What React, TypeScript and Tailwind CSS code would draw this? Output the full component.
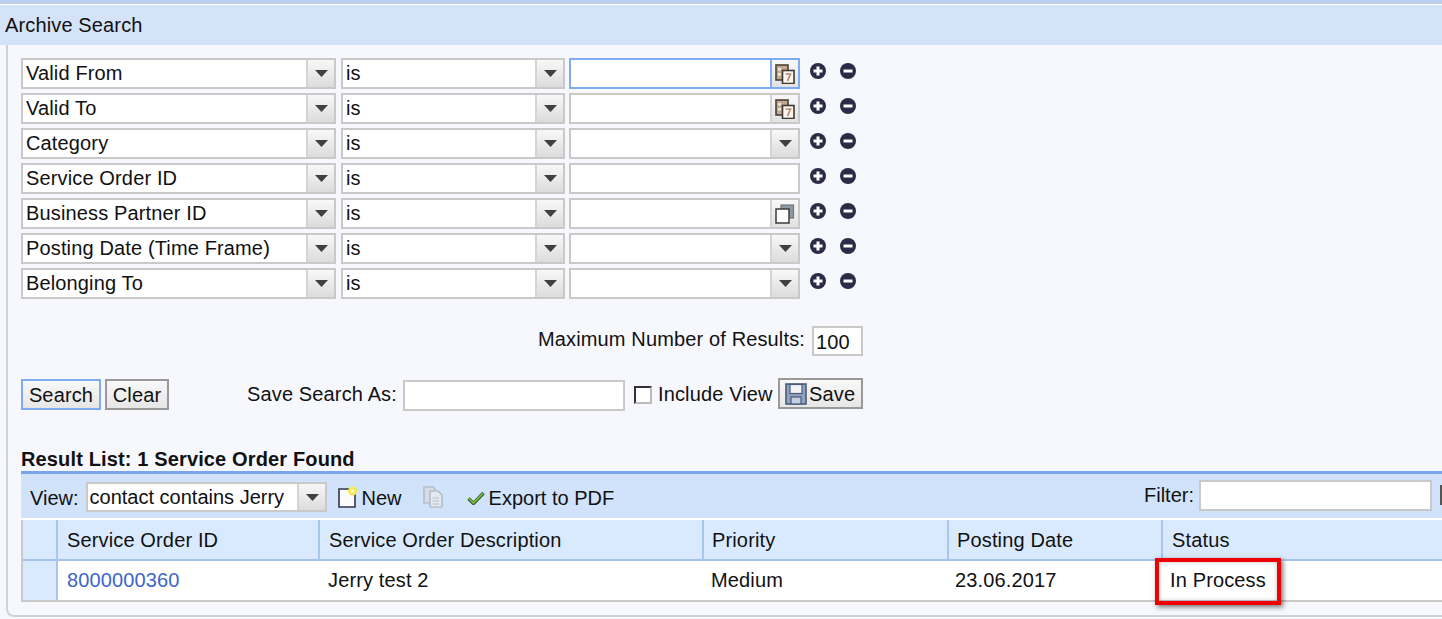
import React from "react";

function Arrow() {
  return (
    <svg width="13" height="7" viewBox="0 0 13 7">
      <path d="M0 0H13L6.5 7Z" fill="#404040" />
    </svg>
  );
}

function DropBox({ w, text }: { w: string; text?: string }) {
  return (
    <div className={`${w} h-[31px] flex border-2 border-[#c9c9c9] bg-white`}>
      <div className="flex-1 min-w-0 pl-[3px] leading-[27px] whitespace-nowrap overflow-hidden">{text}</div>
      <ArrowCell />
    </div>
  );
}

function ArrowCell() {
  return (
    <div className="w-[28px] shrink-0 border-l-2 border-[#d4d4d4] bg-gradient-to-b from-[#f8f8f8] to-[#dcdcdc] flex items-center justify-center pl-px">
      <Arrow />
    </div>
  );
}

function Calendar() {
  return (
    <svg width="20" height="20" viewBox="0 0 20 20">
      <rect x="1" y="1" width="12" height="15" fill="#c2a88f" stroke="#4a4238" strokeWidth="1.6" />
      <rect x="3" y="4" width="3" height="2.5" fill="#f1e8dc" />
      <rect x="3" y="9" width="3" height="2.5" fill="#f1e8dc" />
      <rect x="7.5" y="6.5" width="11.5" height="13" fill="#fbf7f1" stroke="#3f3a33" strokeWidth="1.6" />
      <path d="M10.5 10H15.5L12.5 17" fill="none" stroke="#b98a70" strokeWidth="1.7" />
    </svg>
  );
}

function Pages() {
  return (
    <svg width="20" height="20" viewBox="0 0 20 20">
      <rect x="6" y="1" width="12.5" height="13" fill="#8d9aa3" stroke="#6d777d" strokeWidth="1.2" />
      <rect x="1" y="5" width="13" height="14" fill="#fdfdfd" stroke="#3c3c3c" strokeWidth="1.5" />
    </svg>
  );
}

function CalendarCell({ active }: { active?: boolean }) {
  return (
    <div
      className={`w-[28px] shrink-0 border-l-2 ${active ? "border-[#7fabf2]" : "border-[#d4d4d4]"} bg-gradient-to-b from-[#f8f8f8] to-[#e2e2e2] flex items-center justify-center`}
    >
      <Calendar />
    </div>
  );
}

function PlusMinus() {
  return (
    <div className="flex gap-[14px] ml-[10px] -mt-[3px] h-[31px] items-center">
      <svg width="16" height="16" viewBox="0 0 16 16">
        <circle cx="8" cy="8" r="8" fill="#2b2b45" />
        <path d="M8 3.5V12.5M3.5 8H12.5" stroke="#fff" strokeWidth="3" />
      </svg>
      <svg width="16" height="16" viewBox="0 0 16 16">
        <circle cx="8" cy="8" r="8" fill="#2b2b45" />
        <path d="M3.5 8H12.5" stroke="#fff" strokeWidth="3" />
      </svg>
    </div>
  );
}

function FilterRow({ label, children }: { label: string; children: React.ReactNode }) {
  return (
    <div className="flex h-[31px] mb-[4px]">
      <DropBox w="w-[315px]" text={label} />
      <div className="ml-[5px]">
        <DropBox w="w-[224px]" text="is" />
      </div>
      <div className="ml-[4px]">{children}</div>
      <PlusMinus />
    </div>
  );
}

function ValueBox({ children, active }: { children?: React.ReactNode; active?: boolean }) {
  return (
    <div className={`w-[231px] h-[31px] flex border-2 bg-white ${active ? "border-[#7fabf2]" : "border-[#c9c9c9]"}`}>
      <div className="flex-1" />
      {children}
    </div>
  );
}

function PlainInput({ w }: { w: string }) {
  return <div className={`${w} h-[31px] border-2 border-[#c9c9c9] bg-white`} />;
}

function Btn({ children, w, active }: { children: React.ReactNode; w: string; active?: boolean }) {
  return (
    <div
      className={`${w} h-[31px] border-2 ${active ? "border-[#7fabf2]" : "border-[#999999]"} bg-gradient-to-b from-[#f8f8f8] to-[#e6e6e6] flex items-center justify-center`}
    >
      {children}
    </div>
  );
}

function Cell({ w, pl, border, children, link }: { w: string; pl: string; border?: boolean; children?: React.ReactNode; link?: boolean }) {
  return (
    <div
      className={`${w} ${pl} shrink-0 h-full flex items-center whitespace-nowrap ${border ? "border-l-2 border-[#a9c6ee]" : ""} ${link ? "text-[#3d66c9]" : ""}`}
    >
      {children}
    </div>
  );
}

export default function App() {
  return (
    <div className="w-[1442px] h-[619px] overflow-hidden relative bg-[#f7f8fe] text-[20px] tracking-[0.14px] text-[#111] font-['Liberation_Sans',Arial,sans-serif]">
      <div className="h-[4px] bg-[#b9cfee]" />
      <div className="h-px bg-white" />
      <div className="h-[40px] bg-[#d4e3f8] pl-[5px] leading-[40px]">Archive Search</div>

      <div className="ml-[6px] h-[572px] border-l-2 border-b-2 border-[#d2d2d2] rounded-bl-lg pl-[13px] pt-[13px]">
        <FilterRow label="Valid From">
          <ValueBox active>
            <CalendarCell active />
          </ValueBox>
        </FilterRow>
        <FilterRow label="Valid To">
          <ValueBox>
            <CalendarCell />
          </ValueBox>
        </FilterRow>
        <FilterRow label="Category">
          <ValueBox>
            <ArrowCell />
          </ValueBox>
        </FilterRow>
        <FilterRow label="Service Order ID">
          <ValueBox />
        </FilterRow>
        <FilterRow label="Business Partner ID">
          <ValueBox>
            <div className="w-[28px] shrink-0 border-l-2 border-[#d4d4d4] bg-gradient-to-b from-[#f8f8f8] to-[#e2e2e2] flex items-center justify-center">
              <Pages />
            </div>
          </ValueBox>
        </FilterRow>
        <FilterRow label="Posting Date (Time Frame)">
          <ValueBox>
            <ArrowCell />
          </ValueBox>
        </FilterRow>
        <FilterRow label="Belonging To">
          <ValueBox>
            <ArrowCell />
          </ValueBox>
        </FilterRow>

        <div className="w-[842px] mt-[26px] h-[31px] flex justify-end items-center">
          <span className="mr-[7px] -mt-[3px]">Maximum Number of Results:</span>
          <div className="w-[51px] h-[30px] border-2 border-[#c9c9c9] bg-white pl-[2px] leading-[28px]">100</div>
        </div>

        <div className="w-[842px] mt-[23px] h-[31px] flex items-center">
          <Btn w="w-[80px]" active>Search</Btn>
          <div className="ml-[4px]">
            <Btn w="w-[64px]">Clear</Btn>
          </div>
          <span className="ml-[78px] -mt-[2px]">Save Search As:</span>
          <div className="ml-[6px] mt-[1px]">
            <PlainInput w="w-[222px]" />
          </div>
          <div className="ml-[9px] w-[18px] h-[18px] border-2 border-l-[#333] border-t-[#333] border-r-[#bbb] border-b-[#bbb] bg-white" />
          <span className="ml-[6px] -mt-[2px]">Include View</span>
          <div className="ml-[5px] -mt-[2px]">
            <Btn w="w-[85px]">
              <svg width="22" height="22" viewBox="0 0 22 22" className="mr-[2px]">
                <rect x="1" y="1" width="20" height="20" fill="#8fa3c0" stroke="#4a5a78" strokeWidth="1.6" />
                <rect x="5" y="1.5" width="12" height="9" fill="#f2f4f8" stroke="#4a5a78" strokeWidth="1.2" />
                <rect x="6" y="14" width="10" height="7" fill="#c4d0e0" stroke="#4a5a78" strokeWidth="1.2" />
              </svg>
              Save
            </Btn>
          </div>
        </div>

        <div className="mt-[37px] h-[24px] font-bold leading-[24px] whitespace-nowrap">Result List: 1 Service Order Found</div>

        <div className="border-t-[3px] border-[#7ba5ea]">
          <div className="h-[44px] bg-[#d1e3fa] flex items-center pl-[9px] pt-[4px] tracking-normal">
            <span>View:</span>
            <div className="ml-[7px] -mt-[2px]">
              <div className="w-[241px] h-[30px] flex border-2 border-[#c9c9c9] bg-white">
                <div className="flex-1 pl-[2px] leading-[26px] whitespace-nowrap">contact contains Jerry</div>
                <ArrowCell />
              </div>
            </div>
            <svg width="22" height="22" viewBox="0 0 22 22" className="ml-[10px] -mt-[2px]">
              <path d="M2 3H14L18 7V21H2Z" fill="#fbfbfb" stroke="#34344c" strokeWidth="1.6" />
              <circle cx="15.5" cy="5" r="4.5" fill="#f4e94a" />
              <circle cx="15.5" cy="5" r="1.8" fill="#fffde0" />
            </svg>
            <span className="ml-[3px]">New</span>
            <svg width="22" height="22" viewBox="0 0 22 22" className="ml-[20px] -mt-[2px]">
              <path d="M2 1H11L13 3V17H2Z" fill="#d6dde6" stroke="#a9b0b8" strokeWidth="1.2" />
              <path d="M8 5H16L20 9V21H8Z" fill="#e4e9f0" stroke="#a9b0b8" strokeWidth="1.2" />
              <path d="M10.5 12H17M10.5 15H17M10.5 18H17" stroke="#b6bcc4" strokeWidth="1" />
            </svg>
            <svg width="18" height="14" viewBox="0 0 18 14" className="ml-[23px]">
              <path d="M1.5 7.5L6.5 12.5L16.5 2" fill="none" stroke="#3d5c32" strokeWidth="3.4" />
              <path d="M2 7.5L6.5 12L16 2.3" fill="none" stroke="#7cc43f" strokeWidth="1.6" />
            </svg>
            <span className="ml-[4px]">Export to PDF</span>
            <div className="ml-auto flex items-center -mt-[6px]">
              <span className="mr-[5px]">Filter:</span>
              <PlainInput w="w-[233px]" />
              <div className="ml-[8px] w-[6px] h-[20px] border-l-2 border-t-2 border-b-2 border-[#555] mr-[-4px]" />
            </div>
          </div>

          <div className="h-[2px] bg-white" />

          <div className="border-l-2 border-[#c9c9c9]">
            <div className="h-[39px] flex bg-[#d9eafe]">
              <Cell w="w-[33px]" pl="pl-0" />
              <Cell w="w-[262px]" pl="pl-[9px]" border>Service Order ID</Cell>
              <Cell w="w-[384px]" pl="pl-[9px]" border>Service Order Description</Cell>
              <Cell w="w-[245px]" pl="pl-[8px]" border>Priority</Cell>
              <Cell w="w-[214px]" pl="pl-[8px]" border>Posting Date</Cell>
              <Cell w="w-[290px]" pl="pl-[9px]" border>Status</Cell>
            </div>
            <div className="h-[2px] bg-[#a5c3ec]" />
            <div className="h-[41px] flex bg-white border-b-2 border-[#c9c9c9]">
              <div className="w-[33px] shrink-0 h-full bg-[#d9eafe]" />
              <Cell w="w-[262px]" pl="pl-[9px] pb-[2px]" border link>8000000360</Cell>
              <Cell w="w-[384px]" pl="pl-[10px] pb-[2px]">Jerry test 2</Cell>
              <Cell w="w-[245px]" pl="pl-[9px] pb-[2px]">Medium</Cell>
              <Cell w="w-[214px]" pl="pl-[8px] pb-[2px]">23.06.2017</Cell>
              <Cell w="w-[290px]" pl="pl-[9px] pb-[2px]">In Process</Cell>
            </div>
          </div>
        </div>
      </div>

      <div className="absolute left-[1155px] top-[558px] w-[126px] h-[47px] border-[4px] border-[#f10000] shadow-[2px_2px_5px_rgba(0,0,0,0.55),inset_0_0_4px_rgba(0,0,0,0.25)]" />
    </div>
  );
}
